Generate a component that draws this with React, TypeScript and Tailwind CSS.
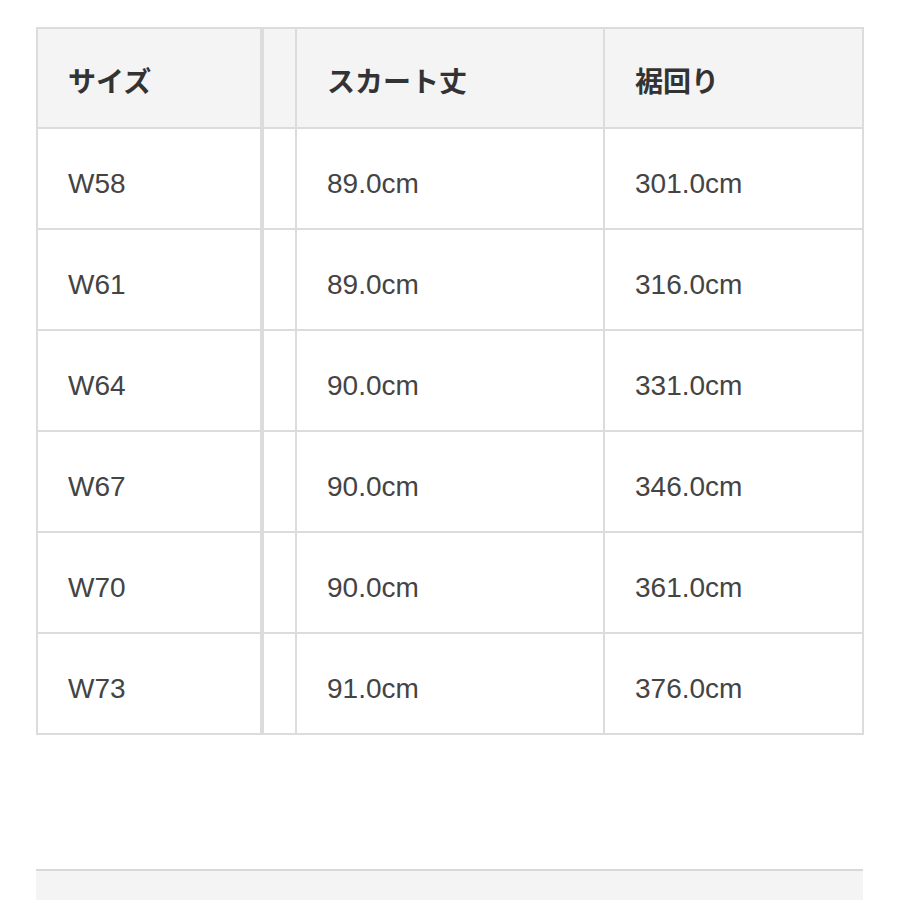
import React from "react";

const rows = [
  ["W58", "89.0cm", "301.0cm"],
  ["W61", "89.0cm", "316.0cm"],
  ["W64", "90.0cm", "331.0cm"],
  ["W67", "90.0cm", "346.0cm"],
  ["W70", "90.0cm", "361.0cm"],
  ["W73", "91.0cm", "376.0cm"],
];

const font = { fontFamily: '"Liberation Sans", "Noto Sans CJK JP", sans-serif' };

export default function App() {
  return (
    <div className="w-[900px] h-[900px] bg-white overflow-hidden" style={font}>
      <div className="ml-[36px] mt-[27px] w-[828px] border-2 border-[#dcdcdc]">
        <div className="grid grid-cols-[222px_35px_308px_259px] h-[98px] bg-[#f4f4f4] text-[28px] font-bold text-[#333]">
          <div className="flex items-center pl-[30px] pt-[10px]">サイズ</div>
          <div className="border-l-4 border-[#dcdcdc]"></div>
          <div className="flex items-center pl-[30px] pt-[10px] border-l-2 border-[#dcdcdc]">スカート丈</div>
          <div className="flex items-center pl-[30px] pt-[10px] border-l-2 border-[#dcdcdc]">裾回り</div>
        </div>
        {rows.map((r) => (
          <div
            key={r[0]}
            className="grid grid-cols-[222px_35px_308px_259px] h-[101px] border-t-2 border-[#dcdcdc] bg-white text-[28px] text-[#444]"
          >
            <div className="flex items-center pl-[30px] pt-[10px]">{r[0]}</div>
            <div className="border-l-4 border-[#dcdcdc]"></div>
            <div className="flex items-center pl-[30px] pt-[10px] border-l-2 border-[#dcdcdc]">{r[1]}</div>
            <div className="flex items-center pl-[30px] pt-[10px] border-l-2 border-[#dcdcdc]">{r[2]}</div>
          </div>
        ))}
      </div>
      <div className="ml-[36px] mt-[134px] w-[827px] h-[40px] border-t-2 border-[#d8d8d8] bg-[#f4f4f4]"></div>
    </div>
  );
}
